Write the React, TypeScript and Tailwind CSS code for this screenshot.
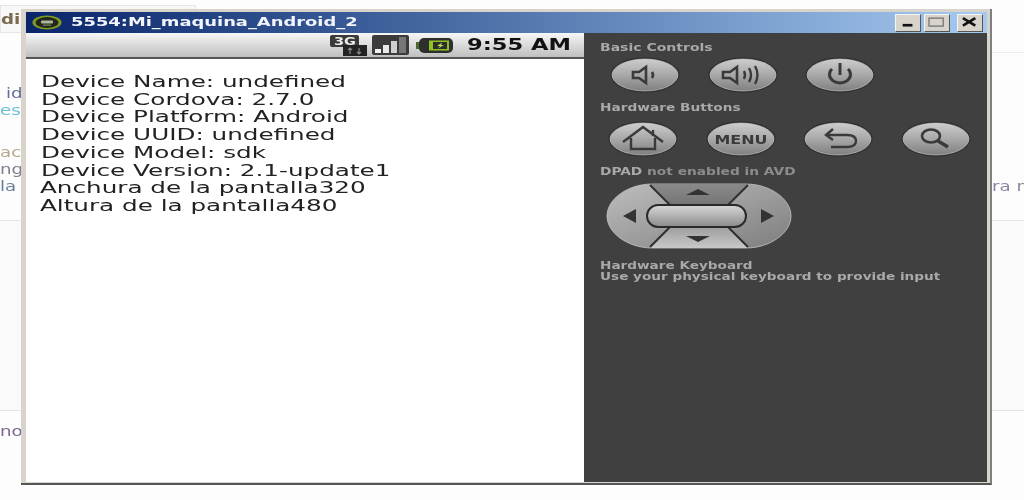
import React from "react";

const sans = "font-['DejaVu_Sans','Liberation_Sans',sans-serif]";

function Btn({ id, children }: { id: string; children?: React.ReactNode }) {
  return (
    <svg width="70" height="36" viewBox="0 0 70 36" className="shrink-0">
      <defs>
        <linearGradient id={id} x1="0" y1="0" x2="0" y2="1">
          <stop offset="0" stopColor="#cdcdcd" />
          <stop offset="0.5" stopColor="#a8a8a8" />
          <stop offset="1" stopColor="#808080" />
        </linearGradient>
      </defs>
      <ellipse cx="35" cy="18" rx="34.5" ry="17.5" fill="#2b2b2b" />
      <ellipse cx="35" cy="18" rx="33" ry="16" fill={`url(#${id})`} stroke="#d0d0d0" strokeWidth="0.6" />
      {children}
    </svg>
  );
}

function Label({ children, w }: { children: React.ReactNode; w: string }) {
  return <div className={`${w} text-[10px] leading-[11px] font-bold text-[#a9a9a9] whitespace-nowrap`}>{children}</div>;
}

function WinBtn({ children }: { children: React.ReactNode }) {
  return (
    <svg width="26" height="18" viewBox="0 0 26 18" className="shrink-0 bg-[#d8d4cc] border-t border-l border-[#f5f5f5] border-r border-b border-r-[#555] border-b-[#555]">
      {children}
    </svg>
  );
}

export default function App() {
  return (
    <div className={`relative w-[1024px] h-[500px] overflow-hidden bg-[#fdfdfd] ${sans} blur-[0.45px]`}>
      {/* page behind the emulator */}
      <div className="flex flex-col h-full text-[14px] leading-[17px] text-[#6b6f8a]">
        <div className="mt-[5px] w-[196px] h-[28px] border border-[#e6e6e6] bg-[#f7f7f7] flex items-center font-bold text-[#7a6a50]">
          <span className="inline-block origin-left scale-x-[1.3]">di</span>
        </div>
        <div className="mt-[52px] pl-[6px] text-[#6a6f9a] h-[17px]"><span className="inline-block origin-left scale-x-[1.3]">id</span></div>
        <div className="text-[#6cc0d8] h-[17px]"><span className="inline-block origin-left scale-x-[1.3]">es</span></div>
        <div className="mt-[25px] text-[#b7a58a] h-[17px]"><span className="inline-block origin-left scale-x-[1.3]">ac</span></div>
        <div className="text-[#7f7f90] h-[17px]"><span className="inline-block origin-left scale-x-[1.3]">ng</span></div>
        <div className="flex justify-between text-[#6a7f96] h-[17px]">
          <span className="inline-block origin-left scale-x-[1.3]">la</span>
          <span className="text-[#8a86a0] w-[32px] inline-block whitespace-nowrap origin-left scale-x-[1.3]">ra n</span>
        </div>
        <div className="mt-[25px] border-t border-[#e4e4e4] bg-[#fafafa] h-[190px]" />
        <div className="border-t border-[#e4e4e4] pt-[12px] text-[#7a6a90] h-[60px]"><span className="inline-block origin-left scale-x-[1.3]">no</span></div>
      </div>
      <div className="absolute left-[990px] right-0 top-[52px] border-t border-[#ececec]" />

      {/* emulator window */}
      <div className="absolute left-[21px] top-[9px] w-[971px] h-[476px] bg-[#d8d4cc] border-r-[2px] border-b-[2px] border-r-[#7f7f7f] border-b-[#555] flex flex-col pl-[5px] pr-[3px] pt-[3px] pb-[1px]">
        {/* title bar */}
        <div className="h-[21px] shrink-0 bg-gradient-to-r from-[#0a246a] to-[#a6caf0] flex items-center pl-[6px] pr-[4px]">
          <svg width="30" height="15" viewBox="0 0 30 15" className="shrink-0">
            <ellipse cx="15" cy="7.5" rx="14.5" ry="7" fill="#7f9a22" />
            <ellipse cx="15" cy="7.5" rx="11.5" ry="5.4" fill="#23271a" />
            <rect x="9" y="5.5" width="12" height="3" rx="1" fill="#aeb5a0" />
            <rect x="11" y="9.5" width="8" height="1.2" fill="#7f8a60" />
          </svg>
          <div className="ml-[9px] w-[286px] text-[12px] leading-[15px] font-bold text-[#f2f5fb] whitespace-nowrap">
            <span className="inline-block origin-left scale-x-[1.49]">5554:Mi_maquina_Android_2</span>
          </div>
          <div className="ml-auto flex items-center gap-[3px] shrink-0">
            <WinBtn><rect x="7" y="10" width="11" height="3" fill="#111" /></WinBtn>
            <WinBtn><rect x="4" y="3.5" width="16" height="9" fill="none" stroke="#777" strokeWidth="1.5" /></WinBtn>
            <div className="w-[1px]" />
            <WinBtn><path d="M5 3.5 L19 12 M19 3.5 L5 12" stroke="#111" strokeWidth="2.8" /></WinBtn>
          </div>
        </div>

        {/* body */}
        <div className="flex flex-1 min-h-0">
          <div className="w-[558px] shrink-0 flex flex-col bg-white">
            <div className="h-[26px] shrink-0 bg-gradient-to-b from-[#f7f7f7] to-[#bfbfbf] border-b-[2px] border-b-[#555] flex items-center justify-end pr-[13px]">
              <svg width="37" height="21" viewBox="0 0 37 21" className="shrink-0">
                <rect x="0" y="0" width="29" height="12" rx="2" fill="#3a3a3a" />
                <rect x="13" y="10" width="24" height="11" fill="#232323" />
                <text x="4" y="10" fontSize="10.5" fontWeight="700" fill="#eee" textLength="22" lengthAdjust="spacingAndGlyphs">3G</text>
                <path d="M20 13v6 M18 15l2-2 2 2 M29 13v6 M27 17l2 2 2-2" stroke="#888" strokeWidth="1.2" fill="none" />
              </svg>
              <svg width="37" height="20" viewBox="0 0 37 20" className="ml-[5px] shrink-0">
                <rect width="37" height="20" rx="2" fill="#3b3b3b" />
                <rect x="3" y="14" width="6" height="4" fill="#f2f2f2" />
                <rect x="11" y="10" width="6" height="8" fill="#e8e8e8" />
                <rect x="19" y="6" width="6" height="12" fill="#d0d0d0" />
                <rect x="27" y="2" width="7" height="16" fill="#777" />
              </svg>
              <svg width="37" height="15" viewBox="0 0 37 15" className="ml-[7px] shrink-0">
                <rect x="0" y="4" width="4" height="7" fill="#4a6a2a" />
                <rect x="3" y="0" width="34" height="15" rx="5" fill="#2e2e2e" />
                <rect x="13" y="2.5" width="20" height="10" fill="#8fc31f" />
                <rect x="17" y="4" width="14" height="7" fill="#2e2e2e" />
                <path d="M26 4.5 L21 8 H24 L22 10.5 L28 7 H25 Z" fill="#b5e050" />
              </svg>
              <div className="ml-[14px] w-[104px] text-[16px] leading-[20px] font-bold text-[#111] whitespace-nowrap">
                <span className="inline-block origin-left scale-x-[1.41]">9:55 AM</span>
              </div>
            </div>
            <div className="pt-[14px] pl-[14px] text-[16px] leading-[17.7px] text-[#222] whitespace-nowrap">
              {[
                "Device Name: undefined",
                "Device Cordova: 2.7.0",
                "Device Platform: Android",
                "Device UUID: undefined",
                "Device Model: sdk",
                "Device Version: 2.1-update1",
              ].map((t) => (
                <div key={t} className="w-fit origin-left scale-x-[1.54] ml-[1px]">{t}</div>
              ))}
              {["Anchura de la pantalla320", "Altura de la pantalla480"].map((t) => (
                <div key={t} className="w-fit origin-left scale-x-[1.54]">{t}</div>
              ))}
            </div>
          </div>

          {/* control panel */}
          <div className="flex-1 bg-[#404040] pl-[16px] pt-[9px] flex flex-col">
            <Label w="w-[113px]"><span className="inline-block origin-left scale-x-[1.4]">Basic Controls</span></Label>
            <div className="flex mt-[4px] ml-[10px] gap-[27.5px]">
              <Btn id="b1">
                <path d="M23 15h6l7-5v16l-7-5h-6z" fill="none" stroke="#3a3a3a" strokeWidth="2.6" />
                <path d="M42 15q2 3 0 6" fill="none" stroke="#3a3a3a" strokeWidth="2.6" />
              </Btn>
              <Btn id="b2">
                <path d="M15 15h7l7-5v16l-7-5h-7z" fill="none" stroke="#3a3a3a" strokeWidth="2.6" />
                <path d="M36 14q2 4 0 8M41 11q4 7 0 14M47 9q5 9 0 18" fill="none" stroke="#3a3a3a" strokeWidth="2.4" />
              </Btn>
              <Btn id="b3">
                <path d="M27 12a10.5 8.5 0 1 0 16 0" fill="none" stroke="#3a3a3a" strokeWidth="3" />
                <path d="M35 6v12" stroke="#3a3a3a" strokeWidth="3" />
              </Btn>
            </div>
            <div className="mt-[9px]"><Label w="w-[140px]"><span className="inline-block origin-left scale-x-[1.37]">Hardware Buttons</span></Label></div>
            <div className="flex mt-[8px] ml-[8px] gap-[27.7px]">
              <Btn id="b4">
                <path d="M15 21L35 6l20 15M23 17v11h24V17" fill="none" stroke="#3a3a3a" strokeWidth="2.4" />
                <path d="M45 9v6" stroke="#3a3a3a" strokeWidth="2.4" />
              </Btn>
              <Btn id="b5">
                <text x="35" y="22.5" textAnchor="middle" fontSize="12" fontWeight="700" fill="#3a3a3a" textLength="53" lengthAdjust="spacingAndGlyphs">MENU</text>
              </Btn>
              <Btn id="b6">
                <path d="M24 14h20q9 0 9 6t-9 6H28" fill="none" stroke="#3a3a3a" strokeWidth="2.4" />
                <path d="M30 8l-7 6 7 5" fill="none" stroke="#3a3a3a" strokeWidth="2.4" />
              </Btn>
              <Btn id="b7">
                <ellipse cx="30" cy="15" rx="9" ry="6.5" fill="none" stroke="#3a3a3a" strokeWidth="2.6" />
                <path d="M37 20l10 6" stroke="#3a3a3a" strokeWidth="3.6" />
              </Btn>
            </div>
            <div className="mt-[9px]"><Label w="w-[195px]">
              <span className="inline-block origin-left scale-x-[1.375]">DPAD <span className="text-[#8c8c8c]">not enabled in AVD</span></span>
            </Label></div>
            <svg width="186" height="68" viewBox="0 0 186 68" className="mt-[5px] ml-[6px] shrink-0">
              <defs>
                <linearGradient id="dp" x1="0" y1="0" x2="1" y2="1">
                  <stop offset="0" stopColor="#bdbdbd" />
                  <stop offset="1" stopColor="#7e7e7e" />
                </linearGradient>
                <linearGradient id="pill" x1="0" y1="0" x2="0" y2="1">
                  <stop offset="0" stopColor="#d8d8d8" />
                  <stop offset="1" stopColor="#8a8a8a" />
                </linearGradient>
                <linearGradient id="up" x1="0" y1="0" x2="0" y2="1">
                  <stop offset="0" stopColor="#8a8a8a" />
                  <stop offset="1" stopColor="#767676" />
                </linearGradient>
                <linearGradient id="dn" x1="0" y1="0" x2="0" y2="1">
                  <stop offset="0" stopColor="#a0a0a0" />
                  <stop offset="1" stopColor="#c8c8c8" />
                </linearGradient>
              </defs>
              <path d="M1 34C1 17 22 2 46 2H140C164 2 185 17 185 34C185 51 164 66 140 66H46C22 66 1 51 1 34Z" fill="url(#dp)" stroke="#c4c4c4" strokeWidth="0.8" />
              <path d="M44 2H142L122 22H64Z" fill="url(#up)" />
              <path d="M44 66H142L122 46H64Z" fill="url(#dn)" />
              <path d="M44 3L64 23M142 3L122 23M44 65L64 45M142 65L122 45" stroke="#2f2f2f" strokeWidth="2" />
              <rect x="41" y="23" width="99" height="22" rx="11" fill="url(#pill)" stroke="#2a2a2a" strokeWidth="2" />
              <path d="M80 13L92 7L104 13Z M80 54L92 60L104 54Z" fill="#333" />
              <path d="M30 27V41L17 34Z M155 27V41L168 34Z" fill="#333" />
            </svg>
            <div className="mt-[10px]"><Label w="w-[152px]"><span className="inline-block origin-left scale-x-[1.36]">Hardware Keyboard</span></Label></div>
            <Label w="w-[341px]"><span className="inline-block origin-left scale-x-[1.36]">Use your physical keyboard to provide input</span></Label>
          </div>
        </div>
      </div>
    </div>
  );
}
